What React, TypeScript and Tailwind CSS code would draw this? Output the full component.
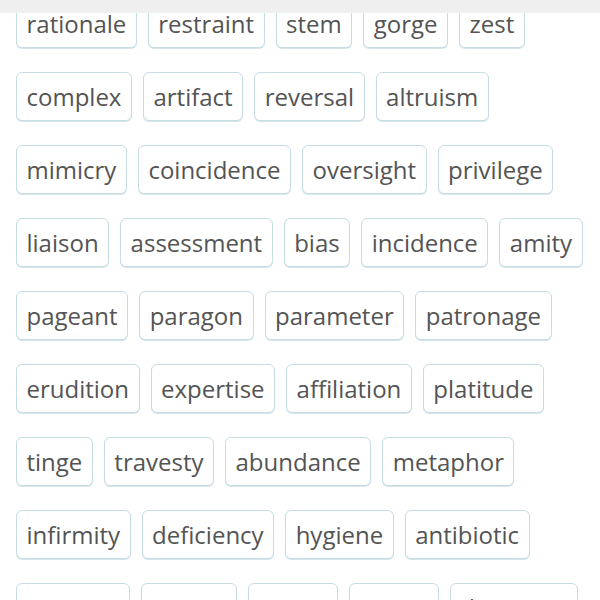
import React from "react";

const rows: string[][] = [
  ["rationale", "restraint", "stem", "gorge", "zest"],
  ["complex", "artifact", "reversal", "altruism"],
  ["mimicry", "coincidence", "oversight", "privilege"],
  ["liaison", "assessment", "bias", "incidence", "amity"],
  ["pageant", "paragon", "parameter", "patronage"],
  ["erudition", "expertise", "affiliation", "platitude"],
  ["tinge", "travesty", "abundance", "metaphor"],
  ["infirmity", "deficiency", "hygiene", "antibiotic"],
  ["nemesis", "tenure", "visage", "canon", "discourse"],
];

function Chip({ word }: { word: string }) {
  return (
    <div className="h-[49px] flex items-center px-[9.5px] pt-px bg-white border border-[#c7dde4] rounded-[6px] shadow-[0_1px_0_#d5e6eb] text-[24px] leading-none text-[#545454] whitespace-nowrap">
      {word}
    </div>
  );
}

export default function App() {
  return (
    <div className="w-[600px] h-[600px] bg-white relative overflow-hidden font-['Open_Sans',sans-serif]">
      {/* sticky header strip */}
      <div className="absolute top-0 left-0 right-0 h-[13px] bg-[#efefef] z-10" />

      <div className="flex flex-col gap-y-[24px] pl-[16px] -mt-px">
        {rows.map((row, i) => (
          <div key={i} className="flex gap-x-[11px]">
            {row.map((w) => (
              <Chip key={w} word={w} />
            ))}
          </div>
        ))}
      </div>
    </div>
  );
}
